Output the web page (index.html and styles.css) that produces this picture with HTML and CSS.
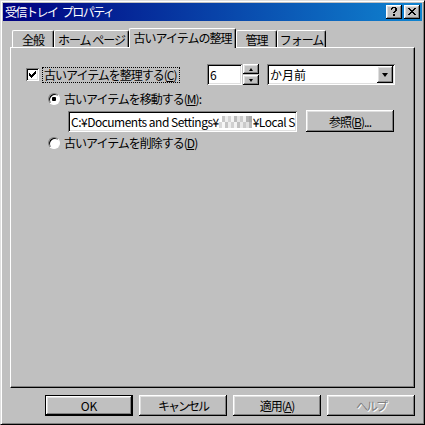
FILE: index.html
```html
<!DOCTYPE html>
<html lang="ja">
<head>
<meta charset="utf-8">
<title>受信トレイ プロパティ</title>
<link rel="stylesheet" href="styles.css">
</head>
<body>
<div class="window">
  <div class="titlebar">
    <span class="title">受信トレイ プロパティ</span>
    <div class="title-buttons">
      <div class="tbtn">
        <svg width="8" height="9" viewBox="0 0 8 9"><path d="M1 1h1v-1h4v1h1v3h-1v1h-1v1h-2v-1h1v-1h1v-3h-2v1h-1v1h-1z M3 7h2v2h-2z" fill="#000"/></svg>
      </div>
      <div class="tbtn">
        <svg width="8" height="7" viewBox="0 0 8 7"><path d="M0 0h2v1h1v1h2v-1h1v-1h2v1h-1v1h-1v1h-1v1h1v1h1v1h1v1h-2v-1h-1v-1h-2v1h-1v1h-2v-1h1v-1h1v-1h1v-1h-1v-1h-1v-1h-1z" fill="#000"/></svg>
      </div>
    </div>
  </div>

  <div class="tabs">
    <div class="tab w-general">全般</div>
    <div class="tab w-home">ホーム ページ</div>
    <div class="tab tab-active w-archive">古いアイテムの整理</div>
    <div class="tab w-manage">管理</div>
    <div class="tab w-form">フォーム</div>
  </div>

  <div class="panel">
    <div class="row row1">
      <div class="check-group">
        <div class="checkbox">
          <svg width="7" height="7" viewBox="0 0 7 7"><path d="M0 2h1v1h1v1h1v-1h1v-1h1v-1h1v-1h1v3h-1v1h-1v1h-1v1h-1v1h-1v-1h-1v-1h-1z" fill="#000"/></svg>
        </div>
        <span class="label focus">古いアイテムを整理する(<u>C</u>)</span>
      </div>
      <div class="edit spin-edit">6</div>
      <div class="spin">
        <div class="spin-btn"><span class="tri-up"></span></div>
        <div class="spin-btn"><span class="tri-down"></span></div>
      </div>
      <div class="edit combo">
        <span class="combo-text">か月前</span>
        <div class="combo-btn"><span class="tri-down big"></span></div>
      </div>
    </div>

    <div class="row row2">
      <div class="radio checked"><span class="dot"></span></div>
      <span class="label">古いアイテムを移動する(<u>M</u>):</span>
    </div>

    <div class="row row3">
      <div class="edit path-edit"><span>C:¥Documents and Settings¥</span><span class="mosaic"></span><span>¥Local S</span></div>
      <div class="button browse"><span>参照(<u>B</u>)...</span></div>
    </div>

    <div class="row row4">
      <div class="radio"></div>
      <span class="label">古いアイテムを削除する(<u>D</u>)</span>
    </div>
  </div>

  <div class="footer">
    <div class="button default"><span class="latin">OK</span></div>
    <div class="button"><span class="kana">キャンセル</span></div>
    <div class="button"><span>適用(<u>A</u>)</span></div>
    <div class="button disabled"><span class="kana">ヘルプ</span></div>
  </div>
</div>
</body>
</html>
```

FILE: styles.css
```css
* { box-sizing: border-box; }

html, body {
  margin: 0;
  padding: 0;
  background: #c0c0c0;
}

body {
  font-family: "Noto Sans CJK JP", "Noto Sans", sans-serif;
  font-size: 12px;
  color: #000;
  letter-spacing: -1px;
}

u { text-decoration: underline; text-underline-offset: 1px; }

.window {
  width: 425px;
  height: 425px;
  background: #c0c0c0;
  border: 1px solid;
  border-color: #dfdfdf #000 #000 #dfdfdf;
  box-shadow: inset 1px 1px #fff, inset -1px -1px #808080;
  padding: 2px;
  display: flex;
  flex-direction: column;
}

.titlebar {
  height: 18px;
  background: linear-gradient(to right, #000080, #1084d0);
  display: flex;
  align-items: center;
  justify-content: space-between;
  padding: 0 2px 0 2px;
  flex-shrink: 0;
}

.title {
  color: #fff;
  font-size: 12px;
  line-height: 18px;
  letter-spacing: -1.5px;
  word-spacing: 3px;
}

.title-buttons {
  display: flex;
  gap: 2px;
}

.tbtn {
  width: 16px;
  height: 14px;
  background: #c0c0c0;
  box-shadow: inset -1px -1px #000, inset 1px 1px #fff, inset -2px -2px #808080, inset 2px 2px #dfdfdf;
  display: flex;
  align-items: center;
  justify-content: center;
  padding-bottom: 1px;
}

.tabs {
  display: flex;
  align-items: flex-end;
  height: 19px;
  margin: 7px 7px 0 9px;
  flex-shrink: 0;
}

.tab {
  height: 17px;
  border-top: 1px solid #fff;
  border-left: 1px solid #fff;
  border-right: 1px solid #000;
  border-radius: 2px 2px 0 0;
  box-shadow: inset -1px 0 #808080;
  background: #c0c0c0;
  display: flex;
  align-items: center;
  justify-content: center;
  line-height: 14px;
  white-space: nowrap;
  padding-top: 1px;
}

.tab-active {
  height: 20px;
  margin-bottom: -1px;
  position: relative;
  z-index: 1;
  padding-top: 0;
  padding-bottom: 2px;
}

.w-general { width: 42px; }
.w-home { width: 75px; }
.w-archive { width: 107px; }
.w-manage { width: 41px; }
.w-form { width: 49px; }

.panel {
  margin: 0 7px;
  height: 341px;
  border: 1px solid;
  border-color: #fff #000 #000 #fff;
  box-shadow: inset -1px -1px #808080;
  padding-top: 16px;
  flex-shrink: 0;
}

.row {
  display: flex;
  align-items: center;
}

.row1 { height: 21px; }

.check-group {
  display: flex;
  align-items: center;
  width: 196px;
  padding-left: 15px;
}

.checkbox {
  width: 13px;
  height: 13px;
  background: #fff;
  box-shadow: inset 1px 1px #808080, inset -1px -1px #fff, inset 2px 2px #000, inset -2px -2px #dfdfdf;
  display: flex;
  align-items: center;
  justify-content: center;
  flex-shrink: 0;
}

.label {
  white-space: nowrap;
  line-height: 14px;
}

.check-group .label {
  margin-left: 4px;
  padding: 0 2px 0 1px;
}

.focus {
  outline: 1px dotted #000;
  outline-offset: 0;
}

.edit {
  background: #fff;
  box-shadow: inset 1px 1px #808080, inset -1px -1px #fff, inset 2px 2px #000, inset -2px -2px #dfdfdf;
  height: 21px;
  display: flex;
  align-items: center;
  white-space: nowrap;
  overflow: hidden;
}

.spin-edit {
  width: 35px;
  padding-left: 3px;
}

.spin {
  width: 16px;
  height: 21px;
  margin-left: 1px;
  display: flex;
  flex-direction: column;
  gap: 1px;
}

.spin-btn {
  flex: 1;
  background: #c0c0c0;
  box-shadow: inset -1px -1px #000, inset 1px 1px #fff, inset -2px -2px #808080, inset 2px 2px #dfdfdf;
  display: flex;
  align-items: center;
  justify-content: center;
}

.tri-up, .tri-down {
  width: 0;
  height: 0;
  border-left: 2.5px solid transparent;
  border-right: 2.5px solid transparent;
}
.tri-up { border-bottom: 3px solid #000; }
.tri-down { border-top: 3px solid #000; }
.tri-down.big {
  border-left-width: 3.5px;
  border-right-width: 3.5px;
  border-top-width: 4px;
}

.combo {
  width: 128px;
  margin-left: 8px;
  padding: 2px 2px 2px 3px;
  justify-content: space-between;
}

.combo-text { letter-spacing: 0; }

.combo-btn {
  width: 16px;
  height: 17px;
  background: #c0c0c0;
  box-shadow: inset -1px -1px #000, inset 1px 1px #fff, inset -2px -2px #808080, inset 2px 2px #dfdfdf;
  display: flex;
  align-items: center;
  justify-content: center;
}

.row2 {
  height: 20px;
  margin-top: 4px;
  padding-left: 37px;
}

.radio {
  width: 12px;
  height: 12px;
  border-radius: 50%;
  background: #fff;
  border: 1px solid;
  border-color: #808080 #fff #fff #808080;
  box-shadow: inset 1px 1px #000;
  display: flex;
  align-items: center;
  justify-content: center;
  flex-shrink: 0;
  margin-right: 4px;
}

.dot {
  width: 4px;
  height: 4px;
  background: #000;
  border-radius: 1px;
}

.row3 {
  height: 22px;
  margin-top: 1px;
  padding-left: 57px;
}

.path-edit {
  width: 229px;
  padding-left: 3px;
  margin-top: 1px;
  letter-spacing: -0.5px;
}

.mosaic {
  display: inline-block;
  width: 33px;
  height: 12px;
  flex-shrink: 0;
  margin: 0 1px 0 0;
  background:
    linear-gradient(90deg, #ffffff 0 3px, #c8c8c8 3px 6px, #eeeeee 6px 9px, #d4d4d4 9px 12px, #f4f4f4 12px 15px, #bcbcbc 15px 18px, #e4e4e4 18px 21px, #cccccc 21px 24px, #f0f0f0 24px 27px, #b4b4b4 27px 30px, #a8a8a8 30px 33px) top / 33px 6px no-repeat,
    linear-gradient(90deg, #d8d8d8 0 3px, #f6f6f6 3px 6px, #c4c4c4 6px 9px, #ececec 9px 12px, #d0d0d0 12px 15px, #f2f2f2 15px 18px, #c0c0c0 18px 21px, #e8e8e8 21px 24px, #cacaca 24px 27px, #e0e0e0 27px 30px, #b8b8b8 30px 33px) bottom / 33px 6px no-repeat;
}

.button {
  background: #c0c0c0;
  box-shadow: inset -1px -1px #000, inset 1px 1px #fff, inset -2px -2px #808080, inset 2px 2px #dfdfdf;
  display: flex;
  align-items: center;
  justify-content: center;
  white-space: nowrap;
}

.browse {
  width: 88px;
  height: 22px;
  margin-left: 9px;
}

.row4 {
  height: 20px;
  margin-top: 1px;
  padding-left: 37px;
}

.footer {
  display: flex;
  justify-content: flex-end;
  gap: 6px;
  margin-top: 7px;
  padding-right: 7px;
}

.footer .button {
  width: 88px;
  height: 21px;
}

.footer .button.default {
  border: 1px solid #000;
}

.latin { letter-spacing: 0; }
.kana { letter-spacing: -2px; }

.disabled {
  color: #808080;
  text-shadow: 1px 1px #fff;
}
```
